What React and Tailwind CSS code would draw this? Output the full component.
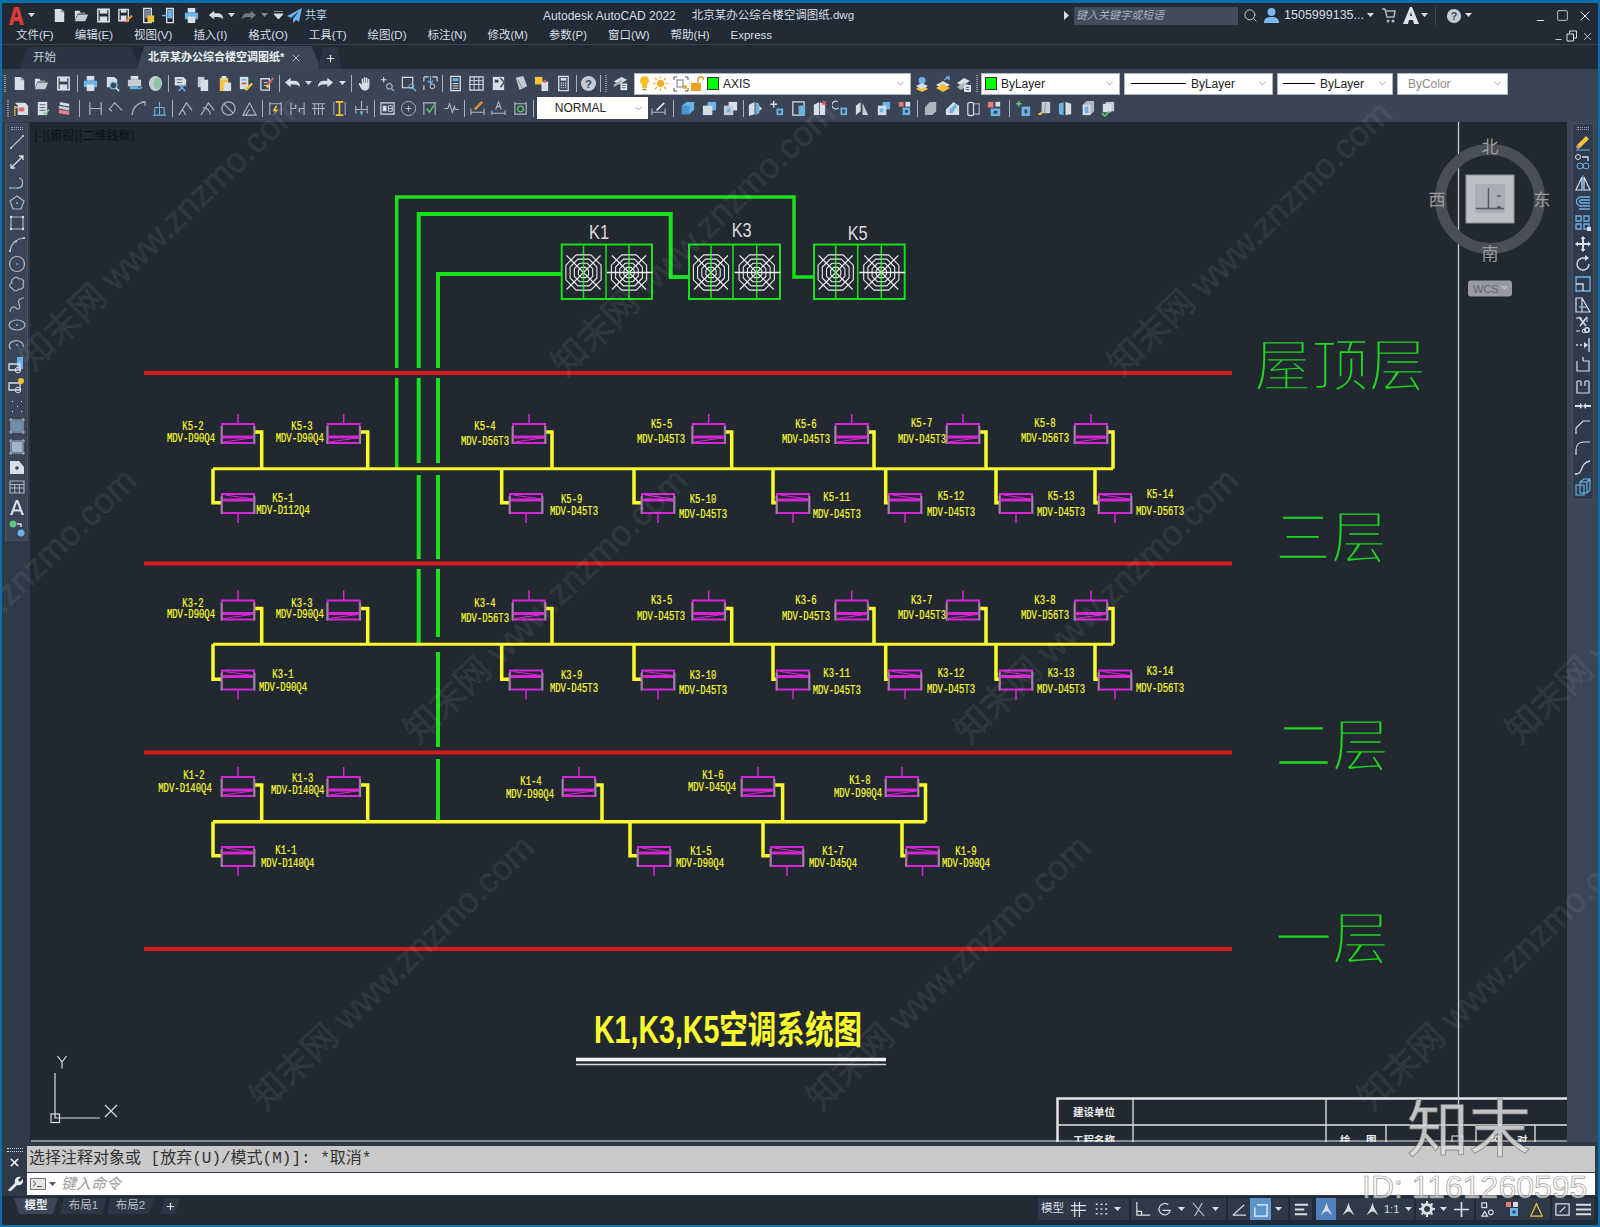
import React from 'react';
import { ChevronDown, Search, X, Minus, Square, Plus } from 'lucide-react';

const W = '#d8dee6';
const L = '#aeb6c0';
const B = '#69b3e7';
const Y = '#f2c33a';
const O = '#e88f2a';

const solid = (d, c = W) => <path d={d} fill={c} />;
const line = (d, c = W, w = 1.3) => <path d={d} fill="none" stroke={c} strokeWidth={w} />;

const icons = {
  new: <>{solid('M4 2h7l3 3v11H4z')}{line('M11 2v3h3', '#6d7683', 1)}</>,
  open: <>{solid('M2 14V4h5l1 2h5v1H5z')}{solid('M5 8h11l-3 7H2z', '#c3cad3')}</>,
  save: <>{line('M3 2.5h12v13H3z', W, 1.6)}{solid('M5 2h8v5H5z')}{solid('M5 10h8v6H5z')}</>,
  saveas: <>{line('M2 2.5h10v12H2z', W, 1.5)}{solid('M4 2h6v4H4z')}{solid('M4 9h6v5H4z')}{line('M9 16l7-7', O, 2.2)}</>,
  phone: <>{line('M5 1.5h8v15H5z', W, 1.5)}{solid('M6 3h6v9H6z', '#7e8794')}{solid('M9 9h7v7H9z', Y)}</>,
  send: <>{line('M6 1.5h7v15H6z', W, 1.5)}{solid('M7 3h5v9H7z', B)}{line('M1 9h5', B, 1.6)}</>,
  print: <>{solid('M5 1h8v5H5z')}{solid('M2 6h14v7H2z', B)}{solid('M5 10h8v7H5z')}</>,
  preview: <>{solid('M3 2h8l3 3v8H3z')}<circle cx="10" cy="11" r="3.5" fill="#3a4555" stroke={B} strokeWidth="1.5" />{line('M12.5 13.5l3.5 3.5', W, 1.8)}</>,
  plot: <>{solid('M5 1h8v4H5z')}{solid('M2 5h14v7H2z', '#c6ccd4')}{solid('M4 12h9v3H4z', B)}{line('M13 15l4-2', B, 1.6)}</>,
  publish: <><ellipse cx="9" cy="9" rx="7" ry="8" fill="#c6ccd4" /><ellipse cx="11" cy="9" rx="4" ry="6" fill="#8bc3a5" /></>,
  cut: <>{solid('M3 2h9l3 3v6H3z')}{line('M5 5h6M5 8h6', '#5d6673', 1)}{line('M7 10l7 7M14 10l-7 7', B, 1.4)}</>,
  copy: <>{solid('M4 2h7v11H4z', '#c3cad3')}{solid('M7 5h8v12H7z')}</>,
  paste: <>{solid('M4 3h9v14H4z', Y)}{solid('M6 1h5v4H6z')}{solid('M8 8h8v9H8z')}</>,
  match: <>{solid('M3 2h9v13H3z')}{solid('M5 4h5v2H5z', B)}{solid('M5 8h5v2H5z', '#d35454')}{line('M9 16l7-7', Y, 2.6)}</>,
  brush: <>{line('M2 4h9v12H2z', W, 1.4)}{line('M5 8h4M5 11h4', W, 1)}{line('M9 11l6-8', '#e06060', 2.2)}{line('M8 13l2-2', Y, 2.6)}</>,
  undo: <>{solid('M1 8l6-5v3h4c4 0 6 3 6 7-1-2-3-3-6-3H7v3z')}</>,
  redo: <>{solid('M17 8l-6-5v3H7c-4 0-6 3-6 7 1-2 3-3 6-3h4v3z')}</>,
  redoDim: <>{solid('M17 8l-6-5v3H7c-4 0-6 3-6 7 1-2 3-3 6-3h4v3z', '#6f7885')}</>,
  pan: <>{solid('M5 9V4.5c0-1.2 1.6-1.2 1.6 0V8h.6V3c0-1.3 1.7-1.3 1.7 0v5h.6V3.6c0-1.2 1.6-1.2 1.6 0V8.5h.5V5c0-1.1 1.5-1.1 1.5 0v6.5c0 3-2 5-4.6 5-2.200 0-3.500-1.200-4.600-3L2 9.800c-.7-1.100.7-2 1.500-1L5 10.500z')}</>,
  zoomr: <>{line('M5 2v6M2 5h6', W, 1.2)}<circle cx="11" cy="12" r="3" fill="none" stroke={W} />{line('M13 14l3 3', B, 1.6)}</>,
  zoomw: <>{line('M2.500 2.500h11v11h-11z', W, 1.2)}<circle cx="12" cy="12" r="2.500" fill="none" stroke={B} />{line('M14 14l3 3', B, 1.6)}</>,
  zoomp: <>{line('M2 2h5M2 2v5M16 2h-5M16 2v5M2 16v-5', W, 1.2)}{line('M9 1v8M6 6l3 3 3-3', B, 1.3)}<circle cx="11" cy="12" r="2.500" fill="none" stroke={W} /></>,
  prop: <>{line('M4 1.500h10v15H4z', W, 1.400)}{solid('M6 3.500h6v3H6z', B)}{line('M6 9h6M6 11.500h6M6 14h6', W, 1)}</>,
  dc: <>{line('M2 2h14v14H2z', W, 1.300)}{line('M6.500 2v14M11.500 2v14M2 6h14M2 10h14', W, 1)}</>,
  toolp: <>{solid('M3 2h12v14H3z')}{solid('M5 5h4v3H5z', '#3a4555')}{line('M11 3l4 5-4 5', '#3a4555', 1.500)}</>,
  sheet: <>{solid('M4 3l8-2 4 11-8 4z', '#c6ccd4')}{line('M6 5l5 9', '#7e8794', 1)}</>,
  markup: <>{solid('M2 2h8v8H2z', Y)}{solid('M9 7h7v10H9z')}{solid('M11 5l3 0 0 3-3 0z', '#d35454')}</>,
  calc: <>{line('M4 1.500h10v15H4z', W, 1.400)}{solid('M6 3h6v3H6z')}{line('M6 8.500h1.500M8.300 8.500h1.500M10.600 8.500h1.500M6 11h1.500M8.300 11h1.500M10.600 11h1.500M6 13.500h1.500M8.300 13.500h1.500M10.600 13.500h1.500', W, 1.300)}</>,
  help: <><circle cx="9" cy="9" r="8" fill="#c5cbd3" /><text x="9" y="13.500" textAnchor="middle" fontSize="12" fontWeight="700" fill="#3a4555" fontFamily="Liberation Sans">?</text></>,
  layers: <>{solid('M2 7l8-5 6 3-8 5z')}{solid('M2 10l8-5 0 3-8 5z', '#a7afb9')}{solid('M9 9h7v7H9z', '#e8ecf0')}{line('M10.500 11h4M10.500 13.500h4', '#4f5865', 1)}</>,
  lay1: <><circle cx="9" cy="5.500" r="3.500" fill={B} />{solid('M3 14l6-5 6 5-6 3z', Y)}{solid('M3 11l6-3 6 3-6 3z', W)}</>,
  lay2: <>{solid('M2 10l7-4 7 4-7 4z')}{solid('M2 13l7-4 7 4-7 4z', Y)}{line('M10 5l5-3M12 2h3v3', B, 1.300)}</>,
  lay3: <>{solid('M2 8l7-5 6 3-8 5z')}{solid('M2 12l6-4 6 2-8 5z', L)}{solid('M9 10h7v7H9z')}{line('M11 12.500h3M11 14.500h3', '#4f5865', 1)}</>,
  ts1: <>{line('M2 17V7l8 3v5', Y, 1.200)}{solid('M2 3h11l3 3v10H5V6z')}{solid('M6 8h6v4H6z', '#e06464')}</>,
  ts2: <>{solid('M4 2h10v14H4z')}{line('M6 5h6M6 8h6M6 11h6', '#5c6470', 1)}{line('M10 13l2 2 4-5', '#7ed37a', 1.600)}</>,
  ts3: <>{solid('M4 2l10 2v3L4 5z')}{solid('M3 6l11 2v3L3 9z', '#c6ccd4')}{solid('M3 10l11 2v4L3 14z', '#e18484')}</>,
  dim1: <>{line('M3 2v14M15 2v14M3 9h12', L, 1.200)}</>,
  dim2: <>{line('M2 9l5-6 8 8M7 3l-5 6M4 12l-3-3', L, 1.200)}</>,
  dim3: <>{line('M2 16C3 8 8 3 16 2M12 2h4v4', L, 1.200)}</>,
  dim4: <>{line('M2 16h14M9 2v14M4 8h10M4 8v8M14 8v8', B, 1.100)}</>,
  dim5: <>{line('M2 16L10 3l6 8M5 11c2 0 3 1 4 5', L, 1.200)}</>,
  dim6: <>{line('M2 16L10 3l6 8M4 8a8 8 0 0 1 8 8', L, 1.200)}</>,
  dim7: <><circle cx="9" cy="9" r="7" fill="none" stroke={L} strokeWidth="1.300" />{line('M4 4l10 10', L, 1.200)}</>,
  dim8: <>{line('M2 16h14L9 3zM5 16l4-6', L, 1.200)}</>,
  dim9: <>{line('M3 2v14M15 2v14M3 4h12', L, 1.200)}{solid('M9 6l-3 6h3l-2 4 5-6H9l2-4z', Y)}</>,
  dim10: <>{line('M2 3v13M16 3v13M2 9h5M11 9h5M7 9v-4M11 9v4', L, 1.200)}</>,
  dim11: <>{line('M2 4h14M5 4v12M9 4v12M13 4v12M2 9h14', L, 1.100)}</>,
  dim12: <>{line('M5 2h8M5 16h8M9 2v14', Y, 1.800)}{line('M3 2v14M15 2v14', L, 1)}</>,
  dim13: <>{line('M9 1v9M3 10h12M3 6v8M15 6v8', L, 1.200)}{solid('M7 12h4l-2 5z', B)}</>,
  box1: <>{line('M2 3h14v12H2z', W, 1.200)}{solid('M4 6h4v6H4z', W)}{line('M10 6h4v6h-4zM10 9h4', W, 1)}</>,
  circle: <><circle cx="9" cy="9" r="7.500" fill="none" stroke={L} />{line('M6 9h6M9 6v6', L, 1.200)}</>,
  dim14: <>{line('M2 3h14M3 3v13M15 3v13', L, 1.200)}{line('M6 9l3 4 5-8', '#66c46a', 1.500)}</>,
  dim15: <>{line('M1 9h4l2-5 3 9 2-6 1 3h4', L, 1.200)}</>,
  ann1: <>{line('M2 16V9M16 16V9M2 13h14', L, 1.200)}{line('M6 10l8-8', O, 2.400)}</>,
  ann2: <>{line('M2 16V11M16 16V11M2 14h14', L, 1.200)}{line('M6 10L9 2l3 8M7 7h4', L, 1.200)}</>,
  ann3: <>{line('M3 2v14M15 2v14M3 4h12M3 15h12', L, 1.200)}<circle cx="9" cy="9.500" r="3" fill="none" stroke="#66c46a" strokeWidth="1.400" /></>,
  annp: <>{line('M2 16V9M16 16V9M2 13h14', L, 1.200)}{line('M7 11l8-8', W, 2)}</>,
  b1: <>{solid('M3 6l5-4h8v8l-5 5H3z', B)}{solid('M3 6h8v9H3z', '#4c97d2')}</>,
  b2: <>{solid('M7 2h9v9H7z', B)}{solid('M2 6h10v10H2z', W)}</>,
  b3: <>{solid('M7 2h9v9H7z', W)}{solid('M2 6h10v10H2z', '#c6ccd4')}{solid('M5 9h4v4H5z', B)}</>,
  c1: <>{solid('M2 5l6-3v13l-6 2z', W)}{solid('M9 2l4 2v10l-4 2z', B)}{solid('M13 6l3 3-3 3z', W)}</>,
  c2: <>{line('M6 1v7M2.500 4.500h7', W, 1.600)}{solid('M9 9h7v7H9z', B)}{solid('M11 11h3v3h-3z', '#3a4555')}</>,
  c3: <>{line('M3 2h12v14H3z', W, 1.300)}{solid('M9 6h7v10H9z', B)}</>,
  c4: <>{solid('M3 5l6-3 6 3v11H3z', W)}{line('M9 2v14', '#5c6470', 1)}{line('M12 1l4 4M16 1l-4 4', '#e05a5a', 1.600)}</>,
  c5: <>{line('M6 2a4 4 0 1 0 1 6', W, 1.200)}{solid('M9 8h7v8H9z', B)}{solid('M11 10h3v4h-3z', '#3a4555')}</>,
  c6: <>{solid('M2 16V6l5-4v10z', W)}{solid('M9 3l6 13H9z', '#c6ccd4')}</>,
  c7: <>{solid('M8 2h8v8H8z', B)}{solid('M3 6h9v10H3z', W)}{solid('M5 9h4v4H5z', B)}</>,
  c8: <>{solid('M3 2h5v5H3z', '#e37b7b')}{solid('M10 2h5v5h-5z', W)}{solid('M7 8h8v8H7z', B)}{solid('M9.500 10.500h3v3h-3z', '#3a4555')}</>,
  d1: <>{solid('M2 8l5-6h7v10l-4 4H2z', L)}{solid('M10 14l6-4', W)}</>,
  d2: <>{solid('M2 10L10 2l6 4v10H2z', W)}{solid('M6 10l6-6 2 2-5 8H6z', B)}</>,
  d3: <>{line('M3 4a3 1.500 0 0 1 6 0v11a3 1.500 0 0 1-6 0z', W, 1.300)}{line('M9 4h6v11H9', L, 1.200)}</>,
  d4: <>{solid('M2 2h6v6H2z', '#e37b7b')}{solid('M10 2h5v5h-5z', W)}{solid('M5 9h10v8H5z', B)}{solid('M8 11.500h4v3H8z', '#3a4555')}</>,
  e1: <>{line('M4 1v6M1 4h6', '#66c46a', 1.700)}{solid('M7 7h9v10H7z', B)}{solid('M10 10h3v4h-3z', '#3a4555')}</>,
  e2: <>{solid('M6 2h9v12H6z', '#c6ccd4')}{solid('M2 15l4-3v4H2z', Y)}{line('M10 3l-1 11', '#8b939f', 1)}</>,
  e3: <>{solid('M2 4l5-2v14l-5-1z', B)}{solid('M9 2l6 2v11l-6 1z', W)}</>,
  e4: <>{solid('M4 5l4-4h8v11l-4 4H4z', L)}{solid('M4 5h8v11H4z', W)}{solid('M6 7h4v7H6z', B)}</>,
  e5: <>{solid('M6 2h9v10H6z', '#c6ccd4')}{solid('M3 4h9v9H3z', W)}{line('M2 14l3 3 5-5', '#66c46a', 1.800)}</>,
  l1: <>{line('M3 15L15 3', L, 1.200)}<circle cx="3" cy="15" r="1" fill={W} /><circle cx="15" cy="3" r="1" fill={W} /></>,
  l2: <>{line('M3 15L15 3M11 3h4v4M3 11v4h4', W, 1.300)}</>,
  l3: <>{line('M2 14h8c6 0 6-9 1-10', L, 1.200)}<circle cx="2" cy="14" r="1" fill={B} /><circle cx="10" cy="14" r="1" fill={B} /></>,
  l4: <>{line('M9 2l7 5-3 8H5L2 7z', L, 1.200)}<circle cx="9" cy="9" r="1" fill={B} /></>,
  l5: <>{line('M3 3h12v12H3z', L, 1.200)}<circle cx="3" cy="3" r="1.200" fill={W} /><circle cx="15" cy="3" r="1.200" fill={W} /><circle cx="3" cy="15" r="1.200" fill={W} /><circle cx="15" cy="15" r="1.200" fill={W} /></>,
  l6: <>{line('M2 16C3 9 8 4 16 3', L, 1.200)}<circle cx="2" cy="16" r="1" fill={W} /><circle cx="8" cy="6.500" r="1" fill={W} /><circle cx="16" cy="3" r="1" fill={W} /></>,
  l7: <><circle cx="9" cy="9" r="7.500" fill="none" stroke={L} strokeWidth="1.200" /><circle cx="9" cy="9" r="1" fill={B} /></>,
  l8: <>{line('M5 4c2-3 5-2 6 0 3-1 6 2 4 5 2 3-2 6-4 5-2 3-6 2-7-1-3 0-3-5 0-5-1-2 0-4 1-4z', L, 1.200)}</>,
  l9: <>{line('M2 16c1-6 4-6 6-4s5 1 3-4 3-6 5-6', L, 1.200)}</>,
  l10: <><ellipse cx="9" cy="9" rx="8" ry="5" fill="none" stroke={L} strokeWidth="1.200" /><circle cx="9" cy="9" r="1" fill={B} /></>,
  l11: <>{line('M3 13A7 5 0 1 1 15 11', L, 1.200)}<circle cx="9" cy="9" r="1" fill={B} /></>,
  l12: <>{solid('M9 1h6v12H9z', B)}{line('M1 8h11v6H1z', W, 1.300)}<circle cx="10" cy="14" r="2.800" fill="none" stroke={W} /></>,
  l13: <>{line('M1 6h11v7H1z', W, 1.300)}<circle cx="13" cy="4" r="3" fill={Y} /><circle cx="10" cy="13" r="2.800" fill="none" stroke={W} /></>,
  l14: <>{solid('M4 4h1v1H4zM13 4h1v1h-1zM9 9h1v1H9zM4 14h1v1H4zM13 14h1v1h-1z', W)}</>,
  l15: <>{line('M1 3h16M1 15h16M3 1v16M15 1v16', L, 1.100)}{solid('M4 4h10v10H4z', '#6f8fb0')}</>,
  l16: <>{line('M1 3h16M1 15h16M3 1v16M15 1v16', L, 1.100)}{solid('M4 4h10v10H4z', '#9db6cf')}</>,
  l17: <>{solid('M2 3h9l5 6v7H2z')}<circle cx="9" cy="10" r="1.800" fill="#3a4555" /></>,
  l18: <>{line('M2 3h14v12H2zM2 6.500h14M2 10h14M6.700 6.500V15M11.300 6.500V15', L, 1.100)}</>,
  l19: <>{solid('M7.800 2h2.400L16 17h-2.500l-1.200-3.500H5.700L4.500 17H2zM6.500 11.500h5L9 4.500z')}</>,
  l20: <><circle cx="5" cy="5" r="3.500" fill="#61c77e" /><circle cx="13" cy="14" r="3.500" fill={B} />{line('M9 5h4v3', W, 1.400)}</>,
  anno: <>{solid('M9 1l2 6 5 9-6-5-1 1-1-1-6 5 5-9z')}</>,
  r1: <>{solid('M3 12l9-9 3 3-9 9z', Y)}{solid('M3 12l3 3-2 1-2-2z', '#e8a08f')}{line('M2 17h14', B, 1)}</>,
  r2: <><circle cx="4" cy="4" r="2.500" fill="none" stroke={W} /><circle cx="6" cy="13" r="3" fill="none" stroke={B} /><circle cx="12" cy="13" r="3" fill="none" stroke={B} />{line('M8 4h6v4', W, 1.300)}</>,
  r3: <>{line('M8 3L2 16h6zM10 3l6 13h-6z', W, 1.200)}{line('M9 1v16', B, 1)}</>,
  r4: <>{line('M16 3H7a4.500 4.500 0 0 0 0 9h9M16 6H7a1.500 1.500 0 0 0 0 3h9M16 15H5', B, 1.300)}</>,
  r5: <>{line('M2 2h5v5H2zM10 2h5v5h-5zM2 10h5v5H2zM10 10h5v5h-5z', B, 1.300)}{solid('M13 13h4v4h-4z', W)}</>,
  r6: <>{solid('M9 1l2.500 3H10v4h4V6.500L17 9l-3 2.500V10h-4v4h1.500L9 17l-2.500-3H8v-4H4v1.500L1 9l3-2.500V8h4V4H6.500z')}</>,
  r7: <>{line('M15 9a6 6 0 1 1-6-6h3', W, 1.400)}{solid('M11 0l4 3-4 3z')}</>,
  r8: <>{line('M2 2h14v14H2z', B, 1.300)}{line('M2 9h7v7', W, 1.300)}</>,
  r9: <>{line('M2 2h6v14H2zM8 2l8 14H8', W, 1.200)}{line('M5 11h8', B, 1.600)}</>,
  r10: <>{line('M2 2h6M2 15h4M13 1v5', W, 1)}{line('M5 1l7 9M13 1l-7 9', W, 1.500)}<circle cx="13" cy="14" r="2.200" fill="none" stroke={W} strokeWidth="1.500" /><circle cx="10" cy="15" r="1.800" fill="none" stroke={W} /></>,
  r11: <>{line('M15 2v14M2 9h2M6 9h2M10 9h3', W, 1.300)}{solid('M10 6l4 3-4 3z')}</>,
  r12: <>{line('M3 5v10h12V5H9M9 5V1', W, 1.200)}</>,
  r13: <>{line('M3 4v12h12V4M7 4v5M7 4H3M11 4v5M11 4h4', W, 1.200)}</>,
  r14: <>{solid('M1 8h5v2H1zM12 8h5v2h-5zM6 6l3 3-3 3zM12 6L9 9l3 3z')}</>,
  r15: <>{line('M2 17v-6l7-7h7', W, 1.200)}</>,
  r16: <>{line('M2 17v-5c0-5 3-8 8-8h6', W, 1.200)}</>,
  r17: <>{line('M2 16c8 0 3-11 14-13', W, 1.300)}<circle cx="2" cy="16" r="1" fill={W} /></>,
  r18: <>{line('M6 4l4-3h6v11l-3 3H6zM6 4h7v11M13 4l3-3M2 7h8v10H2z', B, 1.100)}</>,
};

const Ico = ({ name, size = 18 }) => (
  <svg width={size} height={size} viewBox="0 0 18 18">{icons[name]}</svg>
);

const Caret = ({ dim }) => (
  <svg width="7" height="5" viewBox="0 0 7 5"><path d="M0 0h7L3.500 4z" fill={dim ? '#7e8794' : W} /></svg>
);

const sepWidth = {
  2: 'w-[2px]', 3: 'w-[3px]', 4: 'w-[4px]', 5: 'w-[5px]', 6: 'w-[6px]', 7: 'w-[7px]', 8: 'w-[8px]', 10: 'w-[10px]',
};

const Grip = () => (
  <div className="flex h-full w-[7px] shrink-0 items-center justify-center">
    <div className="h-[17px] w-[2px] border-x border-dotted border-[#8b95a3]" />
  </div>
);

const Strip = ({ items, cell }) => items.map((it, i) => {
  if (it === 'g') return <Grip key={i} />;
  if (it === 'a') return <div key={i} className="flex w-[12px] shrink-0 justify-center"><Caret /></div>;
  if (it === 'ad') return <div key={i} className="flex w-[10px] shrink-0 justify-center"><Caret dim /></div>;
  if (typeof it === 'number') {
    return (
      <div key={i} className={`flex h-full shrink-0 items-center justify-center ${sepWidth[it]}`}>
        <div className="h-[17px] w-px bg-[#a8b0bb]" />
      </div>
    );
  }
  return <div key={i} className={`flex shrink-0 items-center justify-center ${cell}`}><Ico name={it} size={17} /></div>;
});

const Combo = ({ className, children, dim }) => (
  <div className={`flex h-[22px] shrink-0 items-center border border-[#aeb4bb] bg-white pl-[3px] pr-[4px] text-[12px] ${dim ? 'text-[#8d8d8d]' : 'text-[#222]'} ${className}`}>
    {children}
    <ChevronDown size={11} strokeWidth={1.500} className="ml-auto text-[#777]" />
  </div>
);

const quick = ['new', 'open', 'save', 'saveas', 'phone', 'send', 'print'];
const menu = ['文件(F)', '编辑(E)', '视图(V)', '插入(I)', '格式(O)', '工具(T)', '绘图(D)', '标注(N)', '修改(M)', '参数(P)', '窗口(W)', '帮助(H)', 'Express'];
const row1 = ['new', 'open', 'save', 6, 'print', 'preview', 'plot', 'publish', 3, 'cut', 'copy', 'paste', 'match', 'brush', 3, 'undo', 'a', 'redo', 'a', 6, 'pan', 'zoomr', 'zoomw', 'zoomp', 3, 'prop', 'dc', 'toolp', 'sheet', 'markup', 'calc', 3, 'help', 3, 'g', 'layers'];
const row2a = ['ts1', 'ts2', 'ts3', 10, 'dim1', 'dim2', 'dim3', 'dim4', 5, 'dim5', 'dim6', 'dim7', 'dim8', 5, 'dim9', 'dim10', 'dim11', 'dim12', 'dim13', 5, 'box1', 'circle', 'dim14', 'dim15', 5, 'ann1', 'ann2', 'ann3', 6];
const row2b = ['annp', 8, 'b1', 'b2', 'b3', 4, 'c1', 'c2', 'c3', 'c4', 'c5', 'c6', 'c7', 'c8', 5, 'd1', 'd2', 'd3', 'd4', 7, 'e1', 'e2', 'e3', 'e4', 'e5'];
const leftTools = ['l1', 'l2', 'l3', 'l4', 'l5', 'l6', 'l7', 'l8', 'l9', 'l10', 'l11', 'l12', 'l13', 'l14', 'l15', 'l16', 'l17', 'l18', 'l19', 'l20'];
const rightTools = ['r1', 'r2', 'r3', 'r4', 'r5', 'r6', 'r7', 'r8', 'r9', 'r10', 'r11', 'r12', 'r13', 'r14', 'r15', 'r16', 'r17', 'r18'];

/* ---------- drawing data, in page pixels ---------- */

const GREEN = '#19e019';
const YEL = '#fbfb2e';
const MAG = '#d624d6';
const RED = '#d81c1c';

const upper = [
  { n: '2', m: 'MDV-D90Q4', cx: 238, px: 261.7, nx: 193, ny: 430, mx: 191, my: 441.7 },
  { n: '3', m: 'MDV-D90Q4', cx: 343.7, px: 367.7, nx: 302, ny: 430, mx: 299.7, my: 441.7 },
  { n: '4', m: 'MDV-D56T3', cx: 529, px: 552, nx: 485, ny: 430, mx: 485, my: 445 },
  { n: '5', m: 'MDV-D45T3', cx: 708.7, px: 731.7, nx: 661.7, ny: 427.7, mx: 661, my: 443 },
  { n: '6', m: 'MDV-D45T3', cx: 851.7, px: 874, nx: 806, ny: 427.7, mx: 806, my: 443 },
  { n: '7', m: 'MDV-D45T3', cx: 963, px: 986, nx: 921.7, ny: 427, mx: 922, my: 442.7 },
  { n: '8', m: 'MDV-D56T3', cx: 1091, px: 1113, nx: 1045, ny: 427, mx: 1045, my: 442 },
];

const lower = [
  { n: '1', m: 'MDV-D112Q4', cx: 238, px: 213, nx: 283, ny: 501.7, mx: 283, my: 514 },
  { n: '9', m: 'MDV-D45T3', cx: 526, px: 501.7, nx: 571.7, ny: 502.7, mx: 574, my: 515 },
  { n: '10', m: 'MDV-D45T3', cx: 658, px: 634, nx: 703, ny: 502.7, mx: 703, my: 517.7 },
  { n: '11', m: 'MDV-D45T3', cx: 793, px: 773, nx: 836.7, ny: 500.7, mx: 836.7, my: 517.7 },
  { n: '12', m: 'MDV-D45T3', cx: 905, px: 885.7, nx: 951, ny: 500, mx: 951, my: 516 },
  { n: '13', m: 'MDV-D45T3', cx: 1016, px: 996, nx: 1061, ny: 500, mx: 1061, my: 516 },
  { n: '14', m: 'MDV-D56T3', cx: 1115, px: 1095, nx: 1160, ny: 498, mx: 1160, my: 515 },
];

const k1Upper = [
  { n: '2', m: 'MDV-D140Q4', cx: 238, px: 261.7, nx: 194, ny: 779, mx: 185, my: 791.7 },
  { n: '3', m: 'MDV-D140Q4', cx: 343.7, px: 367.7, nx: 302.7, ny: 782, mx: 297.7, my: 794 },
  { n: '4', m: 'MDV-D90Q4', cx: 579, px: 602, nx: 531, ny: 785, mx: 530, my: 797.7 },
  { n: '6', m: 'MDV-D45Q4', cx: 758, px: 782.6, nx: 713, ny: 779, mx: 712, my: 791 },
  { n: '8', m: 'MDV-D90Q4', cx: 902, px: 925.5, nx: 860, ny: 784, mx: 858, my: 797 },
];

const k1Lower = [
  { n: '1', m: 'MDV-D140Q4', cx: 238, px: 213, nx: 286, ny: 854, mx: 287.7, my: 866.7 },
  { n: '5', m: 'MDV-D90Q4', cx: 654, px: 630, nx: 701, ny: 855, mx: 700, my: 867 },
  { n: '7', m: 'MDV-D45Q4', cx: 787, px: 763, nx: 833, ny: 855, mx: 833, my: 867 },
  { n: '9', m: 'MDV-D90Q4', cx: 922.5, px: 902, nx: 966, ny: 855, mx: 966, my: 867 },
];

const Label = ({ x, y, text }) => (
  <text x={x} y={y} textAnchor="middle" textLength={text.length * 5.35} lengthAdjust="spacingAndGlyphs" fontSize="12" fontFamily="Liberation Mono" fill={YEL} stroke={YEL} strokeWidth="0.2">{text}</text>
);

const Indoor = ({ u, sys, dy, labelDy = dy, mainY, up }) => {
  const top = (up ? 424 : 494) + dy;
  const bot = top + 19;
  const band = up ? bot - 6 : top + 6;
  const portY = (up ? 432 : 502.7) + dy;
  const wire = up
    ? `M${u.cx + 16} ${portY}H${u.px}V${mainY}`
    : `M${u.px} ${mainY}V${portY}H${u.cx - 16}`;
  const zig = up
    ? `M${u.cx - 15} ${bot - 1}L${u.cx + 14} ${band + 1}`
    : `M${u.cx - 13} ${top + 1}L${u.cx + 15} ${band - 1}`;
  return (
    <g>
      <path d={wire} fill="none" stroke={YEL} strokeWidth="3.500" />
      <rect x={u.cx - 16} y={top} width="32" height="19" fill="#212830" stroke={MAG} strokeWidth="2" />
      <path d={`M${u.cx - 16} ${band}H${u.cx + 16}`} stroke={MAG} strokeWidth="3" />
      <path d={zig} stroke={MAG} strokeWidth="1" />
      <path d={`M${u.cx - 16.500} ${top + 2}V${bot + 1}M${u.cx + 16.500} ${top + 2}V${bot + 1}`} stroke="#8d8d92" strokeWidth="1.800" />
      <path d={up ? `M${u.cx} ${top}V${top - 10}` : `M${u.cx} ${bot}V${bot + 10}`} stroke={MAG} strokeWidth="1.500" />
      <Label x={u.nx} y={u.ny + labelDy} text={`${sys}-${u.n}`} />
      <Label x={u.mx} y={u.my + labelDy} text={u.m} />
    </g>
  );
};

const octagon = (cx, cy, r) => Array.from({ length: 8 }, (_, i) => {
  const a = Math.PI / 8 + (i * Math.PI) / 4;
  return `${(cx + r * Math.cos(a)).toFixed(1)},${(cy + r * Math.sin(a)).toFixed(1)}`;
}).join(' ');

const Fan = ({ cx, cy, wide }) => (
  <g>
    <path d={`M${cx} ${cy - 27}V${cy + 26}`} stroke={GREEN} strokeWidth="1.500" />
    {[19, 14.500, 10, 5.500].map((r) => (
      <polygon key={r} points={octagon(cx, cy, r)} fill="none" stroke="#ececec" strokeWidth="1.100" />
    ))}
    <path d={`M${cx - 17} ${cy - 17}L${cx + 17} ${cy + 17}M${cx + 17} ${cy - 17}L${cx - 17} ${cy + 17}`} stroke="#ececec" strokeWidth="1.100" />
    {wide && <path d={`M${cx - 22} ${cy}H${cx + 24}`} stroke="#f0f0f0" strokeWidth="1.500" />}
    <path d={`M${cx} ${cy - 18}V${cy + 18}`} stroke={GREEN} strokeWidth="1" opacity="0.7" />
  </g>
);

const Outdoor = ({ x, x2, div, f1, f2, label, lx, ly }) => (
  <g>
    <rect x={x} y="244.500" width={x2 - x} height="54.500" fill="#212830" stroke={GREEN} strokeWidth="2" />
    <path d={`M${div} 245V299`} stroke={GREEN} strokeWidth="1.500" />
    <Fan cx={f1} cy={272.500} />
    <Fan cx={f2} cy={272.500} wide />
    <text x={lx} y={ly} textAnchor="middle" textLength="20" lengthAdjust="spacingAndGlyphs" fontSize="21" fontFamily="Liberation Sans" fill="#dcdcdc">{label}</text>
  </g>
);

const floors = [
  { t: '屋顶层', x: 1254, y: 386, len: 172 },
  { t: '三层', x: 1275, y: 558, len: 112 },
  { t: '二层', x: 1275, y: 766, len: 114 },
  { t: '一层', x: 1275, y: 959, len: 114 },
];

const Drawing = () => (
  <svg viewBox="30 122 1537 1020" className="block h-[1020px] w-[1537px]">
    <text x="34" y="140" fontSize="12" fontFamily="Noto Sans CJK SC" fill="#0c1016">[-][俯视][二维线框]</text>

    {/* green refrigerant pipes, with gaps where they cross */}
    <path d="M396.700 368V197H794V277H814M396.700 378V470" fill="none" stroke={GREEN} strokeWidth="3.500" />
    <path d="M418.700 368V214H670.700V277H689M418.700 378V463M418.700 475V559M418.700 569V645" fill="none" stroke={GREEN} strokeWidth="4" />
    <path d="M438 368V274H562M438 378V463M438 475V559M438 569V637M438 652V747M438 759V821" fill="none" stroke={GREEN} strokeWidth="4" />

    {[373, 563.500, 752.600, 949].map((y) => (
      <path key={y} d={`M144 ${y}H1232`} stroke={RED} strokeWidth="4" />
    ))}

    <path d="M213 468.700H1113" stroke={YEL} strokeWidth="3" />
    <path d="M213 644.200H1113" stroke={YEL} strokeWidth="3" />
    <path d="M213 821.700H925.500" stroke={YEL} strokeWidth="3.500" />

    {upper.map((u) => <Indoor key={u.n} u={u} sys="K5" dy={0} mainY={468.700} up />)}
    {lower.map((u) => <Indoor key={u.n} u={u} sys="K5" dy={0} mainY={468.700} />)}
    {upper.map((u) => <Indoor key={u.n} u={u} sys="K3" dy={176.500} mainY={644.200} up />)}
    {lower.map((u) => (
      <Indoor key={u.n} u={u.n === '1' ? { ...u, m: 'MDV-D90Q4' } : u} sys="K3" dy={176.500} mainY={644.200} />
    ))}
    {k1Upper.map((u) => <Indoor key={u.n} u={u} sys="K1" dy={353} labelDy={0} mainY={821.700} up />)}
    {k1Lower.map((u) => <Indoor key={u.n} u={u} sys="K1" dy={353} labelDy={0} mainY={821.700} />)}

    <Outdoor x={561.700} x2={652} div={606} f1={583.500} f2={629} label="K1" lx={599} ly={239} />
    <Outdoor x={689} x2={780} div={733} f1={711} f2={756.700} label="K3" lx={741.700} ly={237} />
    <Outdoor x={814} x2={904.700} div={857.700} f1={835.700} f2={881.300} label="K5" lx={857.700} ly={240} />

    {floors.map((f) => (
      <text key={f.t} x={f.x} y={f.y} textLength={f.len} lengthAdjust="spacingAndGlyphs" fontSize="57" fontFamily="Noto Sans CJK SC" fill="#1fd81f" stroke="#212830" strokeWidth="2.300">{f.t}</text>
    ))}

    <text x="594" y="1043" textLength="268" lengthAdjust="spacingAndGlyphs" fontSize="38" fontWeight="700" fontFamily="Liberation Sans, Noto Sans CJK SC, sans-serif" fill={YEL}>K1,K3,K5空调系统图</text>
    <path d="M576 1059.500H886" stroke="#f4f4f4" strokeWidth="3.500" />
    <path d="M576 1064.500H886" stroke="#d8d8d8" strokeWidth="1.500" />

    {/* title block */}
    <g stroke="#e4e4e4" fill="none">
      <path d="M1057.500 1143V1098.500H1567" strokeWidth="2.500" />
      <path d="M1057 1125H1567M1133 1098V1142M1326 1098V1142M1386 1125V1142M1476 1125V1142M1535 1125V1142" strokeWidth="1.300" />
    </g>
    <g fill="#ececec" fontFamily="Noto Sans CJK SC" fontSize="10.500" fontWeight="700">
      <text x="1073" y="1116">建设单位</text>
      <text x="1073" y="1144">工程名称</text>
      <text x="1340" y="1144">绘</text>
      <text x="1366" y="1144">图</text>
      <text x="1490" y="1144">校</text>
      <text x="1517" y="1144">对</text>
    </g>

    {/* crosshair */}
    <path d="M1458.500 122V1142" stroke="#c9cdd2" strokeWidth="1.300" />
    <path d="M31 1141H1567" stroke="#f0f0f0" strokeWidth="1.200" />
    <rect x="1452" y="1136" width="11" height="7" fill="none" stroke="#f0f0f0" />

    {/* UCS icon */}
    <g stroke="#dcdcdc" fill="none" strokeWidth="1.200">
      <path d="M55 1073V1118H100" />
      <rect x="51" y="1114" width="8.500" height="8.500" />
      <path d="M57.500 1056l4.500 6 4.500-6M62 1062v6.500" />
      <path d="M105 1105l12 12M117 1105l-12 12" />
    </g>

    {/* view cube */}
    <circle cx="1490" cy="199" r="49.500" fill="none" stroke="#4a4f56" strokeWidth="11" />
    <rect x="1466" y="175" width="48" height="48" fill="#bcbfc4" stroke="#8f9298" />
    <rect x="1475" y="184" width="30" height="29" fill="#a9adb4" />
    <path d="M1488.500 188V209M1476 208.500H1504M1497 196h4M1497 207h4" stroke="#555a61" strokeWidth="1.500" />
    <g fontFamily="Noto Sans CJK SC" fontSize="17" fill="#9d9d9d" textAnchor="middle">
      <text x="1490" y="153">北</text>
      <text x="1490" y="260">南</text>
      <text x="1437" y="206">西</text>
      <text x="1542" y="206">东</text>
    </g>
    <rect x="1468" y="280.500" width="44" height="16" rx="3" fill="#9a9aa6" />
    <text x="1473" y="292.500" fontFamily="Liberation Sans" fontSize="11" fill="#62626d">WCS</text>
    <path d="M1500 286h9l-4.500 4z" fill="#b5b5be" />
  </svg>
);

const Watermark = () => {
  const marks = [
    [33, 372], [566, 378], [1122, 378],
    [-133, 745], [418, 745], [969, 745], [1520, 745],
    [265, 1112], [821, 1112], [1372, 1112],
  ];
  return (
    <svg viewBox="0 0 1600 1227" className="pointer-events-none absolute -left-[2px] -top-[3px] h-[1227px] w-[1600px]">
      {marks.map(([x, y]) => (
        <text key={`${x}-${y}`} x={x} y={y} transform={`rotate(-44 ${x} ${y})`} fontSize="35" fontFamily="Liberation Sans, Noto Sans CJK SC, sans-serif" fill="rgba(255,255,255,0.06)" stroke="rgba(255,255,255,0.11)" strokeWidth="0.500">知末网 www.znzmo.com</text>
      ))}
      <text x="1407" y="1152" fontSize="62" fontFamily="Noto Sans CJK SC" fill="rgba(222,222,222,0.85)" stroke="rgba(120,120,120,0.8)" strokeWidth="0.800">知末</text>
      <text x="1362" y="1198" fontSize="32" fontFamily="Liberation Sans" fill="rgba(245,245,245,0.7)" stroke="rgba(140,140,140,0.9)" strokeWidth="0.700">ID: 1161260595</text>
    </svg>
  );
};

const StatusGroup = ({ className, children }) => (
  <div className={`flex h-[22px] shrink-0 items-center bg-[#2f3947] ${className}`}>{children}</div>
);

const Si = ({ className = 'w-[22px]', children }) => (
  <div className={`flex h-full shrink-0 items-center justify-center ${className}`}>{children}</div>
);

const StatusIcon = ({ d, c = W, w = 1.300 }) => (
  <svg width="17" height="17" viewBox="0 0 18 18"><path d={d} fill="none" stroke={c} strokeWidth={w} /></svg>
);

export default function App() {
  return (
    <div className="relative box-border flex h-[1227px] w-[1600px] flex-col overflow-hidden border-x-2 border-b-2 border-t-[3px] border-[#0c6fa8] bg-[#212a35] [font-family:'Liberation_Sans','Noto_Sans_CJK_SC',sans-serif] text-[#d8dde4]">
      {/* title bar */}
      <div className="flex h-[25px] shrink-0 items-center [&>*]:shrink-0">
        <svg width="15" height="18" viewBox="0 0 15 18" className="ml-[7px]"><path d="M5 0h5l5 18h-4l-1-4H5l-1 4H0zM6 10h3L7.500 4z" fill="#d83a3a" /></svg>
        <div className="ml-[4px] mr-[10px]"><Caret /></div>
        <div className="flex w-[155px] items-center justify-between pl-[6px]">
          {quick.map((q) => <Ico key={q} name={q} size={17} />)}
        </div>
        <div className="ml-[8px] flex items-center gap-[4px]">
          <Ico name="undo" size={16} /><Caret />
          <div className="ml-[2px]"><Ico name="redoDim" size={16} /></div><Caret dim />
          <svg width="9" height="9" viewBox="0 0 9 9" className="ml-[2px]"><path d="M0 0h9M0 3h9L4.500 8z" stroke={W} fill={W} strokeWidth="1" /></svg>
        </div>
        <svg width="15" height="15" viewBox="0 0 15 15" className="ml-[4px]"><path d="M15 0L0 8l4 2 8-7-6 8v4l3-3 3 2z" fill={B} /></svg>
        <span className="ml-[3px] whitespace-nowrap text-[11px] text-[#b9d6ee]">共享</span>
        <div className="ml-[216px] flex items-center gap-[16px] whitespace-nowrap text-[12px]">
          <span>Autodesk AutoCAD 2022</span>
          <span className="text-[11.500px]">北京某办公综合楼空调图纸.dwg</span>
        </div>
        <svg width="5" height="9" viewBox="0 0 5 9" className="ml-auto"><path d="M0 0l5 4.500L0 9z" fill={W} /></svg>
        <div className="ml-[5px] flex h-[18px] w-[164px] items-center bg-[#414c5d] pl-[2px] text-[11px] italic text-[#a8b1bd]">键入关键字或短语</div>
        <Search size={15} strokeWidth={1.500} className="ml-[5px] text-[#c9d0d8]" />
        <svg width="17" height="17" viewBox="0 0 17 17" className="ml-[5px]"><circle cx="8.500" cy="5" r="4" fill="#7cb9ec" /><path d="M1 16c0-5 3-6 7.500-6s7.500 1 7.500 6z" fill="#7cb9ec" /></svg>
        <span className="ml-[4px] whitespace-nowrap text-[12.500px]">1505999135...</span>
        <div className="ml-[3px]"><Caret /></div>
        <svg width="14" height="15" viewBox="0 0 14 15" className="ml-[8px]"><path d="M0 1h3l2 8h7l1-6H4" fill="none" stroke={L} strokeWidth="1.500" /><circle cx="6" cy="13" r="1.500" fill={L} /><circle cx="11" cy="13" r="1.500" fill={L} /></svg>
        <svg width="16" height="17" viewBox="0 0 16 17" className="ml-[7px]"><path d="M7 0h2l7 17h-5l-1-4H6l-1 4H0zM7 9h2L8 5z" fill="#dfe3e8" /></svg>
        <div className="ml-[2px]"><Caret /></div>
        <div className="ml-[7px] h-[22px] w-px bg-[#3a4452]" />
        <div className="ml-[10px]"><Ico name="help" size={16} /></div>
        <div className="ml-[3px]"><Caret /></div>
        <Minus size={11} className="ml-[63px] mt-[9px] text-[#dfe3e8]" strokeWidth={2.500} />
        <Square size={13} className="ml-[10px] text-[#dfe3e8]" strokeWidth={1.500} />
        <X size={16} className="ml-[8px] mr-[5px] text-[#eef0f2]" strokeWidth={1.500} />
      </div>

      {/* menu bar */}
      <div className="flex h-[16px] shrink-0 items-center gap-[21px] pl-[14px] text-[11.500px] leading-none">
        {menu.map((m) => <span key={m} className="whitespace-nowrap">{m}</span>)}
        <div className="ml-auto mr-[4px] flex items-center gap-[3px]">
          <Minus size={9} strokeWidth={2.500} className="mt-[6px]" />
          <svg width="12" height="12" viewBox="0 0 12 12"><path d="M3.500 3V1h7v7h-3M1 4h6.500v7H1z" fill="none" stroke={W} /></svg>
          <X size={13} strokeWidth={1.500} />
        </div>
      </div>

      {/* file tabs */}
      <div className="flex h-[25px] shrink-0 items-end border-t border-[#38424f] pl-[18px] text-[11.500px]">
        <div className="flex h-[22px] w-[119px] items-center bg-[#2b3441] pl-[13px] text-[#c6ccd4] [clip-path:polygon(7px_0,112px_0,119px_100%,0_100%)]">开始</div>
        <div className="-ml-[2px] flex h-[23px] w-[184px] items-center bg-[#3a4555] pl-[11px] text-[11px] font-bold text-[#eef1f4] [clip-path:polygon(7px_0,175px_0,184px_100%,0_100%)]">
          北京某办公综合楼空调图纸*
          <X size={12} strokeWidth={2} className="ml-[6px] text-[#aeb6c0]" />
        </div>
        <div className="-ml-[3px] flex h-[22px] w-[24px] items-center justify-center bg-[#2b3441] [clip-path:polygon(5px_0,19px_0,24px_100%,0_100%)]">
          <Plus size={11} strokeWidth={2.500} />
        </div>
      </div>

      {/* toolbars */}
      <div className="flex h-[53px] shrink-0 flex-col bg-[#3a4454] pl-[2px] pt-[3px] text-[12px]">
        <div className="flex h-[23px] items-center">
          <div className="flex h-full w-[5px] items-center"><div className="h-[17px] w-[2px] border-x border-dotted border-[#8b95a3]" /></div>
          <Strip items={row1} cell="w-[21.700px]" />
          <Combo className="ml-[3px] w-[277px]">
            <div className="flex items-center gap-[2px]">
              <svg width="13" height="17" viewBox="0 0 13 17"><path d="M6.500 1a4.500 4.500 0 0 1 2.500 8.200V13H4V9.200A4.500 4.500 0 0 1 6.500 1z" fill="#f5c028" /><path d="M4.500 14.500h4" stroke="#9a8a50" strokeWidth="1.500" /></svg>
              <svg width="15" height="15" viewBox="0 0 15 15"><circle cx="7.500" cy="7.500" r="3.500" fill="#f2a91e" /><path d="M7.500 0v2.500M7.500 12.500V15M0 7.500h2.500M12.500 7.500H15M2 2l2 2M11 11l2 2M13 2l-2 2M4 11l-2 2" stroke="#f2a91e" strokeWidth="1.200" /></svg>
              <svg width="16" height="16" viewBox="0 0 16 16" className="ml-[3px]"><path d="M1 4V1h3M12 1h3v3M15 12v3h-3M4 15H1v-3" fill="none" stroke="#555" /><rect x="4" y="4" width="6" height="7" fill="none" stroke="#777" /><circle cx="12" cy="11" r="2" fill="#f2a91e" /></svg>
              <svg width="13" height="16" viewBox="0 0 13 16"><path d="M7 7V4a3 3 0 0 1 6 0" fill="none" stroke="#e6961f" strokeWidth="1.500" /><rect x="0" y="7" width="10" height="8" fill="#e9a022" /></svg>
              <div className="ml-[1px] h-[13px] w-[12px] border border-[#333] bg-[#00ff00]" />
              <span className="ml-[2px]">AXIS</span>
            </div>
          </Combo>
          <div className="ml-[1px] flex w-[63px] items-center justify-around">
            <Ico name="lay1" /><Ico name="lay2" /><Ico name="lay3" />
          </div>
          <div className="ml-[1px] flex h-full w-[5px] items-center"><div className="h-[17px] w-[2px] border-x border-dotted border-[#8b95a3]" /></div>
          <Combo className="w-[139px]">
            <div className="h-[13px] w-[12px] border border-[#333] bg-[#00ff00]" />
            <span className="ml-[4px]">ByLayer</span>
          </Combo>
          <Combo className="ml-[4px] w-[149px] pl-[6px]">
            <div className="h-px w-[55px] bg-black" />
            <span className="ml-[5px]">ByLayer</span>
          </Combo>
          <Combo className="ml-[4px] w-[116px] pl-[5px]">
            <div className="h-[1px] w-[32px] bg-black" />
            <span className="ml-[5px]">ByLayer</span>
          </Combo>
          <Combo dim className="ml-[4px] w-[111px] pl-[10px]">
            <span>ByColor</span>
          </Combo>
        </div>
        <div className="mt-[2px] flex h-[22px] w-[1118px] items-center">
          <Grip />
          <Strip items={row2a} cell="w-[21.300px]" />
          <div className="flex h-[22px] w-[111px] shrink-0 items-center bg-white pl-[18px] pr-[4px] text-[12px] text-[#222]">
            NORMAL
            <ChevronDown size={11} strokeWidth={1.500} className="ml-auto text-[#777]" />
          </div>
          <Strip items={row2b} cell="w-[21.300px]" />
        </div>
      </div>

      {/* drawing area with side tool strips */}
      <div className="flex h-[1020px] shrink-0">
        <div className="w-[28px] shrink-0 bg-[#2f3947] pl-[3px] pt-px">
          <div className="flex w-[23px] flex-col items-center border border-[#46505f] bg-[#3a4555] pb-[2px]">
            <div className="mb-[2px] mt-[3px] h-[3px] w-[12px] border-y border-dotted border-[#9aa3af]" />
            {leftTools.map((t) => (
              <div key={t} className="flex h-[20.300px] items-center justify-center"><Ico name={t} /></div>
            ))}
          </div>
        </div>
        <div className="w-[1537px] shrink-0 overflow-hidden bg-[#212830]">
          <Drawing />
        </div>
        <div className="w-[31px] shrink-0 bg-[#3a4555] pl-[5px] pt-px">
          <div className="flex w-[22px] flex-col items-center border border-[#46505f] bg-[#2f3b4d] pb-[2px]">
            <div className="mb-[2px] mt-[3px] h-[3px] w-[12px] border-y border-dotted border-[#9aa3af]" />
            {rightTools.map((t) => (
              <div key={t} className="flex h-[20.300px] items-center justify-center"><Ico name={t} /></div>
            ))}
          </div>
        </div>
      </div>
      <div className="h-[4px] shrink-0 bg-[#2f3947]" />

      {/* command line */}
      <div className="flex h-[50px] shrink-0 bg-[#2f3947]">
        <div className="flex w-[25px] shrink-0 flex-col items-center">
          <div className="mt-[2px] h-[4px] w-[16px] border-y border-dotted border-[#d6dae0]" />
          <X size={13} strokeWidth={3} className="mt-[4px] text-[#eef0f2]" />
          <svg width="16" height="16" viewBox="0 0 16 16" className="mt-[6px]"><path d="M1 15l7-7c-1-4 2-7 6-6l-3 3 2 2 3-3c1 4-2 7-6 6l-7 7z" fill="#e8ebee" /></svg>
        </div>
        <div className="flex w-[1568px] shrink-0 flex-col">
          <div className="flex h-[26px] items-center whitespace-pre bg-[#c9c9c9] pl-[2px] text-[16px] text-[#333] [font-family:'Liberation_Mono','Noto_Sans_CJK_SC',monospace]">选择注释对象或 [放弃(U)/模式(M)]: *取消*</div>
          <div className="mt-px flex h-[22px] items-center bg-white pl-[3px]">
            <svg width="16" height="12" viewBox="0 0 16 12"><rect x="0.500" y="0.500" width="15" height="11" fill="#e6e6e6" stroke="#777" /><path d="M3 3l3 2.500L3 8M7 8.500h5" stroke="#555" fill="none" /></svg>
            <svg width="7" height="4" viewBox="0 0 7 4" className="ml-[3px]"><path d="M0 0h7L3.500 4z" fill="#555" /></svg>
            <span className="ml-[5px] text-[15px] italic text-[#9b9b9b]">键入命令</span>
          </div>
        </div>
      </div>

      {/* layout tabs + status bar */}
      <div className="flex h-[29px] shrink-0 items-start pt-[2px]">
        <div className="ml-[12px] flex h-[16px] w-[44px] items-center justify-center bg-[#3b4656] text-[11.500px] font-bold text-[#e9ecef] [clip-path:polygon(0_0,100%_0,88%_100%,12%_100%)]">模型</div>
        <div className="ml-[2px] flex h-[16px] w-[47px] items-center justify-center bg-[#2d3744] text-[11.500px] text-[#b7bec8] [clip-path:polygon(8%_0,100%_0,90%_100%,0_100%)]">布局1</div>
        <div className="flex h-[16px] w-[47px] items-center justify-center bg-[#2d3744] text-[11.500px] text-[#b7bec8] [clip-path:polygon(8%_0,100%_0,90%_100%,0_100%)]">布局2</div>
        <div className="ml-[6px] flex h-[16px] w-[20px] items-center justify-center bg-[#2d3744] [clip-path:polygon(25%_0,100%_0,75%_100%,0_100%)]">
          <Plus size={11} strokeWidth={2.500} />
        </div>
        <div className="ml-auto mr-[4px] flex items-start gap-[2px]">
          <StatusGroup className="w-[91px]">
            <span className="w-[29px] text-center text-[11.500px]">模型</span>
            <Si><StatusIcon d="M5 1v16M10 1v16M1 5h16M1 10h16" /></Si>
            <Si><StatusIcon w={1.700} d="M4 3.500h2M9 3.500h2M14 3.500h2M4 8.500h2M9 8.500h2M14 8.500h2M4 13.500h2M9 13.500h2M14 13.500h2" /></Si>
            <Si className="w-[12px]"><Caret /></Si>
          </StatusGroup>
          <StatusGroup className="w-[95px]">
            <Si><StatusIcon d="M3 1v14h14M3 11h5v4" /></Si>
            <Si><StatusIcon d="M13 4a6 6 0 1 0 2 6H7" /></Si>
            <Si className="w-[12px]"><Caret /></Si>
            <Si><StatusIcon c={L} d="M3 2l12 14M13 2L5 16" /></Si>
            <Si className="w-[12px]"><Caret /></Si>
          </StatusGroup>
          <StatusGroup className="w-[60px]">
            <Si><StatusIcon d="M2 15h14M2 15L14 4" /></Si>
            <Si className="w-[21px] bg-[#5b93cc]"><StatusIcon c="#f2f5f8" d="M5 4h11v12H3V7" /></Si>
            <Si className="w-[14px]"><Caret /></Si>
          </StatusGroup>
          <StatusGroup className="w-[22px]">
            <Si><StatusIcon w={2} d="M2 4h14M2 9h10M2 14h13" /></Si>
          </StatusGroup>
          <StatusGroup className="ml-[2px] w-[98px]">
            <Si className="w-[20px] bg-[#4f82bd]"><Ico name="anno" size={15} /></Si>
            <Si className="w-[24px]"><Ico name="anno" size={15} /></Si>
            <Si className="w-[24px]"><Ico name="anno" size={15} /></Si>
            <span className="w-[18px] text-[11px]">1:1</span>
            <Si className="w-[12px]"><Caret /></Si>
          </StatusGroup>
          <StatusGroup className="w-[58px]">
            <Si className="w-[21px]"><svg width="16" height="16" viewBox="0 0 16 16"><circle cx="8" cy="8" r="4.500" fill="none" stroke={W} strokeWidth="3" /><path d="M8 0v3M8 13v3M0 8h3M13 8h3M2.500 2.500l2 2M11.500 11.500l2 2M13.500 2.500l-2 2M4.500 11.500l-2 2" stroke={W} strokeWidth="2" /></svg></Si>
            <Si className="w-[13px]"><Caret /></Si>
            <Si><StatusIcon w={1.700} d="M9 1v16M1 9h16" /></Si>
          </StatusGroup>
          <StatusGroup className="w-[74px]">
            <Si className="w-[24px]"><StatusIcon d="M2 2h5v5H2zM9 12a2.500 2.500 0 1 0 5 0 2.500 2.500 0 1 0-5 0M2 16l3-5 3 5z" /></Si>
            <Si className="w-[24px]"><Ico name="c8" /></Si>
            <Si className="w-[24px]"><StatusIcon c={Y} d="M3 16L9 3l6 13z" /></Si>
          </StatusGroup>
          <StatusGroup className="w-[42px]">
            <Si className="w-[21px]"><StatusIcon d="M2 3h14v12H2zM6 12l3-3M12 6L9 9" /></Si>
            <Si className="w-[21px]"><StatusIcon w={2} d="M1 4h16M1 9h16M1 14h16" /></Si>
          </StatusGroup>
        </div>
      </div>

      <Watermark />
    </div>
  );
}
